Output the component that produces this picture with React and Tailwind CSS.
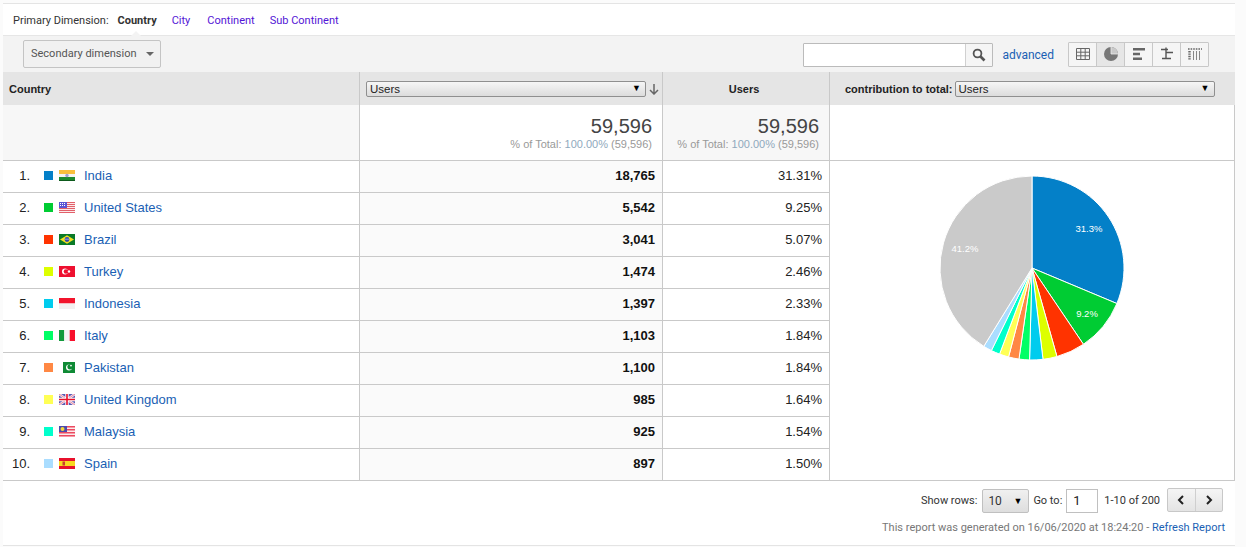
import React from 'react';

const rows = [
  { name: 'India', users: '18,765', pct: '31.31%', value: 31.31, color: '#0480c8', flag: 'in' },
  { name: 'United States', users: '5,542', pct: '9.25%', value: 9.25, color: '#00cc33', flag: 'us' },
  { name: 'Brazil', users: '3,041', pct: '5.07%', value: 5.07, color: '#ff3300', flag: 'br' },
  { name: 'Turkey', users: '1,474', pct: '2.46%', value: 2.46, color: '#ddff00', flag: 'tr' },
  { name: 'Indonesia', users: '1,397', pct: '2.33%', value: 2.33, color: '#00ccee', flag: 'id' },
  { name: 'Italy', users: '1,103', pct: '1.84%', value: 1.84, color: '#00ff66', flag: 'it' },
  { name: 'Pakistan', users: '1,100', pct: '1.84%', value: 1.84, color: '#ff8844', flag: 'pk' },
  { name: 'United Kingdom', users: '985', pct: '1.64%', value: 1.64, color: '#ffff55', flag: 'gb' },
  { name: 'Malaysia', users: '925', pct: '1.54%', value: 1.54, color: '#00ffcc', flag: 'my' },
  { name: 'Spain', users: '897', pct: '1.50%', value: 1.5, color: '#aaddff', flag: 'es' },
];

const Flag = ({ code }) => {
  let body = null;
  if (code === 'in') {
    body = (
      <>
        <rect width="16" height="4" fill="#f9bf3c" />
        <rect y="4" width="16" height="3" fill="#f4f4f0" />
        <rect y="7" width="16" height="4" fill="#1d8a2e" />
        <rect y="10" width="16" height="1" fill="#0d5a1c" />
        <circle cx="8" cy="5.5" r="1.7" fill="#a0a0cc" />
      </>
    );
  } else if (code === 'us') {
    body = (
      <>
        <rect width="16" height="11" fill="#fbeaea" />
        {[0, 2, 4, 6, 8, 10].map((y) => (
          <rect key={y} y={y} width="16" height="1" fill="#e2606a" />
        ))}
        <rect width="8" height="6" fill="#5a56d4" />
        <path d="M1 1.5h1M3 1.5h1M5 1.5h1M1 3.5h1M3 3.5h1M5 3.5h1" stroke="#fff" strokeWidth="1" />
      </>
    );
  } else if (code === 'br') {
    body = (
      <>
        <rect width="16" height="11" fill="#0a7a28" />
        <path d="M8 1.2L15 5.5L8 9.8L1 5.5Z" fill="#f4e021" />
        <circle cx="8" cy="5.5" r="2.4" fill="#3048a8" />
        <path d="M5.8 5.2h4.4" stroke="#dfe8ff" strokeWidth="0.6" />
      </>
    );
  } else if (code === 'tr') {
    body = (
      <>
        <rect width="16" height="11" fill="#ee1030" />
        <circle cx="6" cy="5.5" r="3" fill="#fff" />
        <circle cx="7" cy="5.5" r="2.3" fill="#ee1030" />
        <circle cx="10" cy="5.5" r="1.2" fill="#fff" />
      </>
    );
  } else if (code === 'id') {
    body = (
      <>
        <rect width="16" height="5.5" fill="#f2142c" />
        <rect y="5.5" width="16" height="5.5" fill="#f3f0f0" />
      </>
    );
  } else if (code === 'it') {
    body = (
      <>
        <rect width="5.3" height="11" fill="#129a3c" />
        <rect x="5.3" width="5.4" height="11" fill="#f4f4f4" />
        <rect x="10.7" width="5.3" height="11" fill="#f8102c" />
      </>
    );
  } else if (code === 'pk') {
    body = (
      <>
        <rect x="4" width="12" height="11" fill="#0f8a35" />
        <circle cx="10" cy="5.5" r="3" fill="#fff" />
        <circle cx="11" cy="4.8" r="2.6" fill="#0f8a35" />
        <circle cx="12" cy="3.6" r="0.9" fill="#fff" />
      </>
    );
  } else if (code === 'gb') {
    body = (
      <>
        <rect width="16" height="11" fill="#5a5ab4" />
        <path d="M0 0L16 11M16 0L0 11" stroke="#f4e8f0" strokeWidth="2.4" />
        <path d="M0 0L16 11M16 0L0 11" stroke="#e87088" strokeWidth="0.8" />
        <path d="M8 0V11M0 5.5H16" stroke="#fff" strokeWidth="3.4" />
        <path d="M8 0V11M0 5.5H16" stroke="#e8102c" strokeWidth="1.6" />
      </>
    );
  } else if (code === 'my') {
    body = (
      <>
        <rect width="16" height="11" fill="#fbeaea" />
        {[0, 3, 6, 9].map((y) => (
          <rect key={y} y={y} width="16" height="1.5" fill="#ec4a60" />
        ))}
        <rect width="8" height="6" fill="#4a4aac" />
        <circle cx="3.5" cy="3" r="2" fill="#f4d63c" />
      </>
    );
  } else if (code === 'es') {
    body = (
      <>
        <rect width="16" height="11" fill="#e8102c" />
        <rect y="3" width="16" height="5" fill="#f8d820" />
        <rect x="3.5" y="3.5" width="2.5" height="4" fill="#c8402c" />
      </>
    );
  }
  return (
    <svg width="16" height="11" viewBox="0 0 16 11" className="shrink-0">
      {body}
    </svg>
  );
};

// values are percentages, starts at 12 o'clock and goes clockwise
const PieChart = () => {
  const cx = 94;
  const cy = 94;
  const r = 92;
  const slices = [...rows.map((row) => ({ value: row.value, color: row.color })), { value: 41.22, color: '#cacaca' }];
  let angle = 0;
  const point = (a, radius) => [cx + radius * Math.sin(a), cy - radius * Math.cos(a)];
  return (
    <svg width="188" height="188" viewBox="0 0 188 188" style={{ fontFamily: '"Liberation Sans", sans-serif' }}>
      {slices.map((slice, i) => {
        const start = angle;
        angle += (slice.value / 100) * Math.PI * 2;
        const [x1, y1] = point(start, r);
        const [x2, y2] = point(angle, r);
        const large = angle - start > Math.PI ? 1 : 0;
        return (
          <path
            key={i}
            d={`M${cx} ${cy}L${x1} ${y1}A${r} ${r} 0 ${large} 1 ${x2} ${y2}Z`}
            fill={slice.color}
            stroke="#fff"
            strokeWidth="1"
          />
        );
      })}
      <text x="151" y="58" textAnchor="middle" fontSize="9.5" fill="#fff">31.3%</text>
      <text x="149" y="143" textAnchor="middle" fontSize="9.5" fill="#fff">9.2%</text>
      <text x="27" y="78" textAnchor="middle" fontSize="9.5" fill="#fff">41.2%</text>
    </svg>
  );
};

const SelectBox = ({ className }) => (
  <div
    className={`flex items-center justify-between h-4 pl-[3px] pr-1 rounded-[2px] border border-[#8f8f8f] bg-gradient-to-b from-[#f6f6f6] to-[#dcdcdc] text-[11.5px] text-[#222] ${className}`}
  >
    <span className="pt-[2px] leading-none">Users</span>
    <span className="text-[9px] leading-none text-black">▼</span>
  </div>
);

const ViewButton = ({ active, children, last }) => (
  <div
    className={`h-full flex items-center justify-center ${last ? 'w-[27px]' : 'w-7 border-r border-[#c8c8c8]'} ${active ? 'bg-[#e6e6e6]' : 'bg-[#f5f5f5]'}`}
  >
    <svg width="16" height="16" viewBox="0 0 16 16">
      {children}
    </svg>
  </div>
);

const Toolbar = () => (
  <div className="h-9 bg-[#f3f3f3] flex items-center pl-5 pr-[26px]">
    <div className="w-[138px] h-7 flex items-center justify-between pl-[7px] pr-[6px] rounded-[2px] border border-[#c4c4c4] bg-[#f1f1f1] text-[11px] text-[#555] whitespace-nowrap">
      <span>Secondary dimension</span>
      <span className="w-0 h-0 border-x-[4px] border-x-transparent border-t-[4px] border-t-[#666]" />
    </div>
    <div className="ml-auto flex w-[190px] h-6 mt-px border border-[#bbb] rounded-[1px] bg-white">
      <div className="flex-1" />
      <div className="w-[27px] bg-[#f5f5f5] border-l border-[#d0d0d0] flex items-center justify-center">
        <svg width="14" height="14" viewBox="0 0 14 14" fill="none" stroke="#555">
          <circle cx="5.5" cy="5.5" r="3.9" strokeWidth="1.8" />
          <path d="M8.5 8.5L12.5 12.5" strokeWidth="2.6" />
        </svg>
      </div>
    </div>
    <span className="ml-[9px] mt-px text-xs text-[#1a5fb4]">advanced</span>
    <div className="ml-[14px] flex h-[25px] border border-[#c8c8c8] rounded-[1px]">
      <ViewButton>
        <path d="M1.5 2.5h13v11h-13zM1.5 6.2h13M1.5 9.8h13M5.8 2.5v11M10.2 2.5v11" fill="none" stroke="#666" />
      </ViewButton>
      <ViewButton active>
        <circle cx="8" cy="8" r="7" fill="#777" />
        <path d="M8 1a7 7 0 0 1 7 7H8z" fill="#c9c9c9" />
        <path d="M8 1v7h7" stroke="#eee" strokeWidth="0.8" fill="none" />
      </ViewButton>
      <ViewButton>
        <path d="M2 2h12v2.4H2zM2 6.8h7v2.4H2zM2 11.6h9V14H2z" fill="#666" />
      </ViewButton>
      <ViewButton>
        <path d="M2 3.5h7M7 1.5v5M7 6.5h7M7 6.5v6M3 12.5h9" fill="none" stroke="#555" strokeWidth="1.4" />
      </ViewButton>
      <ViewButton last>
        <path d="M1 3h14" fill="none" stroke="#666" strokeWidth="1.4" strokeDasharray="1.6 1" />
        <path d="M2.5 5v9" fill="none" stroke="#666" strokeWidth="2.4" strokeDasharray="1.4 1" />
        <path d="M6.5 5v9M9.5 5v9M12.5 5v9" fill="none" stroke="#888" strokeWidth="1" />
      </ViewButton>
    </div>
  </div>
);

const CountryRow = ({ row, index }) => (
  <div className="grid grid-cols-[357px_303px_167px] h-8 border-b border-[#c9c9c9]">
    <div className="flex items-center pb-px text-[13px] border-r border-[#c9c9c9]">
      <span className="w-[27px] text-right text-[#222]">{index + 1}.</span>
      <span className="ml-[14px] -mt-px w-[9px] h-[9px]" style={{ backgroundColor: row.color }} />
      <span className="ml-1.5 -mt-px flex">
        <Flag code={row.flag} />
      </span>
      <span className="ml-[9px] text-[#1a5fb4]">{row.name}</span>
    </div>
    <div className="flex items-center justify-end pb-px pr-[7px] text-[13px] font-bold text-[#111] bg-[#fafafa] border-r border-[#c9c9c9]">
      {row.users}
    </div>
    <div className="flex items-center justify-end pb-px pr-[7px] text-[13px] text-[#222] border-r border-[#c9c9c9]">
      {row.pct}
    </div>
  </div>
);

const SummaryCell = ({ className }) => (
  <div className={`flex flex-col items-end pr-[10px] pt-[10px] border-r border-[#c9c9c9] ${className}`}>
    <span className="text-xl leading-[22px] text-[#444]">59,596</span>
    <span className="text-[11px] leading-[14px] text-[#999]">
      % of Total: <span className="text-[#8fa9bd]">100.00%</span> (59,596)
    </span>
  </div>
);

export default function App() {
  return (
    <div className="w-[1246px] h-[547px] overflow-hidden bg-[#fbfbfb] pt-[3px] pl-[3px] pr-[11px] pb-[1px]">
      <div className="h-[543px] bg-white border-t border-b border-[#e4e4e4] flex flex-col">
        <div className="relative h-8 flex items-center pl-2.5 pt-[3px] text-[11px] border-b border-[#e6e6e6]" style={{ fontFamily: 'Roboto, sans-serif' }}>
          <span className="text-[#333]">Primary Dimension:</span>
          <span className="ml-[9px] font-bold text-[#333]">Country</span>
          <span className="ml-[15px] text-[#5316d6]">City</span>
          <span className="ml-[17px] text-[#5316d6]">Continent</span>
          <span className="ml-[15px] text-[#5316d6]">Sub Continent</span>
          <span className="absolute left-[128px] -bottom-px w-0 h-0 border-x-[5px] border-x-transparent border-b-[5px] border-b-[#f3f3f3]" />
        </div>
        <div style={{ fontFamily: 'Roboto, sans-serif' }}>
          <Toolbar />
        </div>
        <div className="flex-1 flex flex-col" style={{ fontFamily: '"Liberation Sans", Arial, sans-serif' }}>
          <div className="grid grid-cols-[357px_303px_167px_1fr] h-[33px] bg-[#e5e5e5] text-[11px] font-bold text-[#222]">
            <div className="flex items-center pl-1.5 pt-px border-r border-[#c9c9c9]">Country</div>
            <div className="flex items-center pl-1.5 border-r border-[#c9c9c9] font-normal">
              <SelectBox className="w-[280px]" />
              <svg width="12" height="12" viewBox="0 0 12 12" fill="none" stroke="#666" strokeWidth="1.5" className="ml-[2px]">
                <path d="M6 1v10M2 7l4 4 4-4" />
              </svg>
            </div>
            <div className="flex items-center justify-center pt-px pr-1 border-r border-[#c9c9c9]">Users</div>
            <div className="flex items-center pl-[15px] border-r border-[#e5e5e5]">
              <span className="pt-px">contribution to total:</span>
              <div className="ml-[2px] font-normal">
                <SelectBox className="w-[260px]" />
              </div>
            </div>
          </div>
          <div className="flex flex-1">
            <div className="w-[827px] shrink-0">
              <div className="grid grid-cols-[357px_303px_167px] h-[56px] border-b border-[#c9c9c9]">
                <div className="bg-[#f7f7f7] border-r border-[#c9c9c9]" />
                <SummaryCell className="bg-white" />
                <SummaryCell className="bg-[#f7f7f7]" />
              </div>
              {rows.map((row, i) => (
                <CountryRow key={row.name} row={row} index={i} />
              ))}
            </div>
            <div className="flex-1 flex flex-col border-r border-[#c9c9c9] border-b">
              <div className="h-[56px] border-b border-[#c9c9c9] -mr-px" />
              <div className="flex justify-center pt-[13px] pr-[1px]">
                <PieChart />
              </div>
            </div>
          </div>
          <div className="h-[64px] flex flex-col items-end pr-[10px] text-[11px]" style={{ fontFamily: 'Roboto, sans-serif' }}>
            <div className="flex items-center mt-2 pr-[2px] text-[#333]">
              <span>Show rows:</span>
              <div className="ml-[5px] w-[47px] h-6 flex items-center justify-between pl-[5px] pr-[6px] rounded-[2px] border border-[#c0c0c0] bg-gradient-to-b from-[#f0f0f0] to-[#dedede] text-xs">
                <span>10</span>
                <span className="text-[9px] leading-none text-black">▼</span>
              </div>
              <span className="ml-1">Go to:</span>
              <div className="ml-1 w-8 h-6 flex items-center pl-[6px] border border-[#c0c0c0] bg-white text-[13px] text-[#222]">1</div>
              <span className="ml-1.5">1-10 of 200</span>
              <div className="ml-[7px] flex h-6 w-[56px] -mt-0.5 rounded-[2px] border border-[#c8c8c8] bg-gradient-to-b from-[#f5f5f5] to-[#e4e4e4]">
                <div className="flex-1 flex items-center justify-center border-r border-[#cfcfcf]">
                  <svg width="8" height="10" viewBox="0 0 8 10" fill="none" stroke="#222" strokeWidth="2">
                    <path d="M6 1L2 5l4 4" />
                  </svg>
                </div>
                <div className="flex-1 flex items-center justify-center">
                  <svg width="8" height="10" viewBox="0 0 8 10" fill="none" stroke="#222" strokeWidth="2">
                    <path d="M2 1l4 4-4 4" />
                  </svg>
                </div>
              </div>
            </div>
            <div className="mt-[7px] text-[#777] text-[11px]">
              This report was generated on 16/06/2020 at 18:24:20 - <span className="text-[#1a5fb4]">Refresh Report</span>
            </div>
          </div>
        </div>
      </div>
    </div>
  );
}
